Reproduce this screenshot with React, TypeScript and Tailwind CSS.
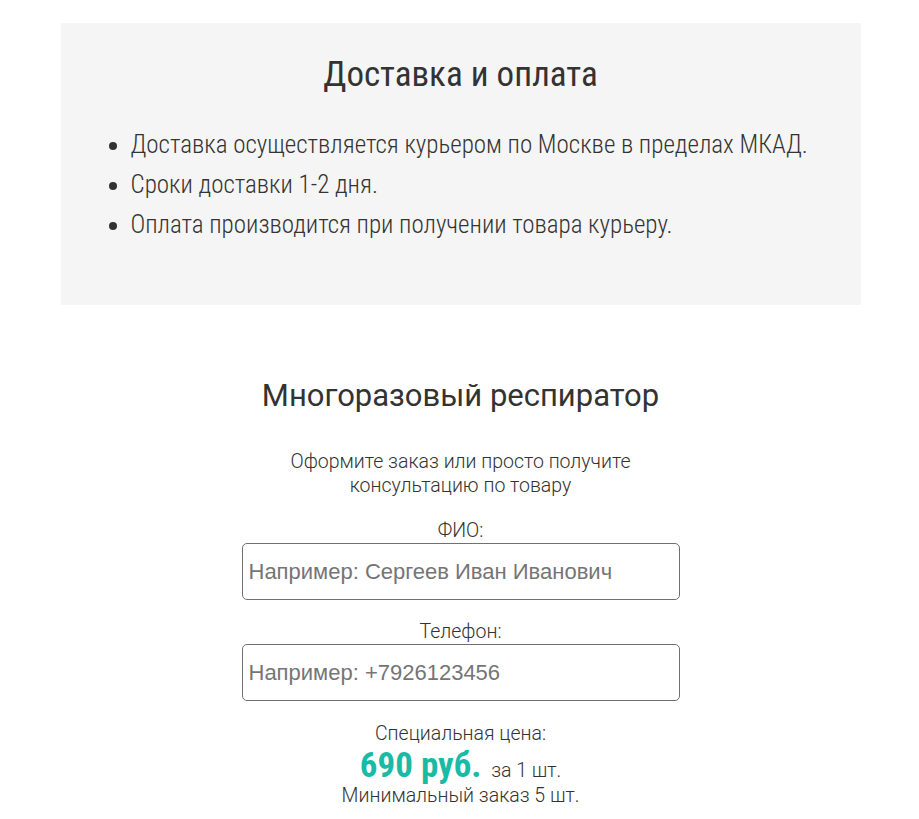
export default function App() {
  return (
    <div className="min-h-screen bg-white text-[#333] font-['Roboto',sans-serif]">
      <div className="mx-auto w-[800px] pt-[23px] translate-x-[1px]">
        <section className="bg-[#f5f5f5] pt-[31px] pb-[60px]">
          <h2 className="text-center text-[35px] leading-[41px] font-normal font-stretch-condensed">
            Доставка и оплата
          </h2>
          <ul className="mt-[30px] list-disc pl-[70px] text-[25px] leading-[40px] font-light font-stretch-condensed">
            <li>Доставка осуществляется курьером по Москве в пределах МКАД.</li>
            <li>Сроки доставки 1-2 дня.</li>
            <li>Оплата производится при получении товара курьеру.</li>
          </ul>
        </section>

        <section className="mt-[69px] flex flex-col items-center text-center">
          <h2 className="text-[31px] leading-[44px] font-normal">
            Многоразовый респиратор
          </h2>
          <p className="mt-[32px] w-[360px] text-[19.5px] leading-[24px] font-light">
            Оформите заказ или просто получите консультацию по товару
          </p>
          <form className="mt-[21px] flex flex-col items-center">
            <label className="text-[19.5px] leading-[24px] font-light">ФИО:</label>
            <input
              type="text"
              placeholder="Например: Сергеев Иван Иванович"
              className="w-[438px] h-[57px] rounded-[5px] border border-[#707070] px-[6px] text-[22px] font-['Liberation_Sans',Arial,sans-serif] placeholder:text-[#757575] outline-none"
            />
            <label className="mt-[20px] text-[19.5px] leading-[24px] font-light">Телефон:</label>
            <input
              type="text"
              placeholder="Например: +7926123456"
              className="w-[438px] h-[57px] rounded-[5px] border border-[#707070] px-[6px] text-[22px] font-['Liberation_Sans',Arial,sans-serif] placeholder:text-[#757575] outline-none"
            />
            <div className="mt-[21px] text-[19.5px] leading-[24px] font-light">Специальная цена:</div>
            <div className="h-[38px] leading-[40px] font-light text-[19.5px]">
              <span className="mr-[5px] text-[35px] font-bold text-[#19bba6] font-stretch-condensed">690 руб.</span>{" "}
              за 1 шт.
            </div>
            <div className="text-[19.5px] leading-[24px] font-light">Минимальный заказ 5 шт.</div>
          </form>
        </section>
      </div>
    </div>
  );
}
